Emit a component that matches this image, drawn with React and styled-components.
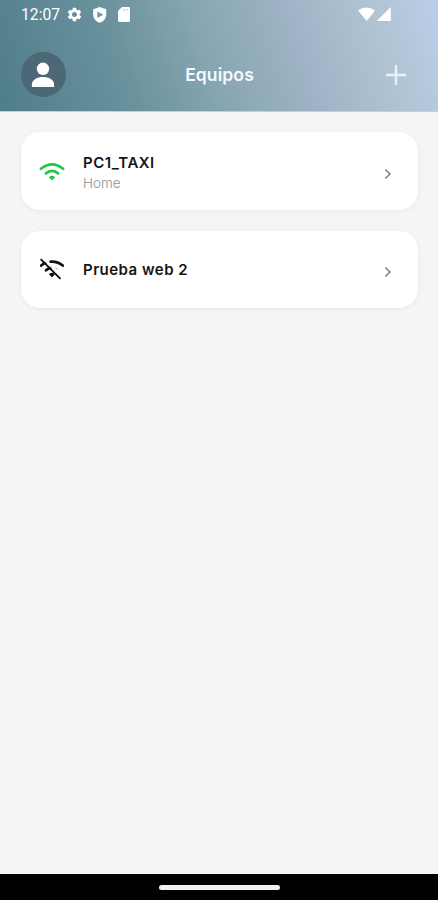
import React from "react";
import styled, { createGlobalStyle } from "styled-components";
import { MdSettings } from "react-icons/md";

const devices = [
  { id: 1, name: "PC1_TAXI", place: "Home", online: true },
  { id: 2, name: "Prueba web 2", place: null, online: false },
];

const ShieldIcon = () => (
  <svg width="14" height="16" viewBox="0 0 14 16">
    <path d="M6.7 0 L13.2 2.3 V7.4 C13.2 11.4 10.6 14.4 6.7 15.8 C2.8 14.4 .2 11.4 .2 7.4 V2.3 Z" fill="#fff" />
    <path d="M4.4 4.4 L10.2 7.7 L4.4 11 Z" fill="#6f96a3" />
  </svg>
);

const SdCardIcon = () => (
  <svg width="12" height="15" viewBox="0 0 12 15">
    <path d="M4 0 H10.6 Q12 0 12 1.4 V13.6 Q12 15 10.6 15 H1.4 Q0 15 0 13.6 V4 Z" fill="#fff" />
    <path d="M4.8 2.8 H10" stroke="#a5bec6" strokeWidth="1" strokeDasharray="1.2 .8" />
  </svg>
);

const SignalIcons = () => (
  <svg width="34" height="15" viewBox="0 0 34 15">
    <path d="M0 3.4 Q8.5 -2.6 17 3.4 L8.8 14 Z" fill="#fff" />
    <path d="M32.8 0 V14 H18.6 Z" fill="#fff" />
  </svg>
);

const PersonIcon = () => (
  <svg width="24" height="26" viewBox="0 0 24 26">
    <circle cx="12" cy="6.8" r="6.2" fill="#fff" />
    <path d="M.9 25 V22.4 C.9 17.6 6.4 15 12 15 C17.6 15 23.1 17.6 23.1 22.4 V25 Z" fill="#fff" />
  </svg>
);

const WifiIcon = () => (
  <svg width="26" height="22" viewBox="0 0 26 22" fill="none">
    <path d="M2 7.8 Q13 -.9 24 7.8" stroke="#1fc843" strokeWidth="2.7" strokeLinecap="round" />
    <path d="M7 12.4 Q13 7.4 19 12.4" stroke="#1fc843" strokeWidth="2.8" strokeLinecap="round" />
    <path d="M10.6 16.2 Q13 14.4 15.4 16.2 L13 18.6 Z" fill="#1fc843" stroke="#1fc843" strokeWidth="1.2" strokeLinejoin="round" />
  </svg>
);

const WifiOffIcon = () => (
  <svg width="26" height="22" viewBox="0 0 26 22" fill="none" stroke="#111" strokeLinecap="round">
    <path d="M2.2 7.6 Q4.3 5.8 6.6 4.8 M11.6 3.6 Q18.6 3.1 23.8 7.6" strokeWidth="2.7" />
    <path d="M7 12.2 Q9.1 10.2 11.8 9.8" strokeWidth="2.8" />
    <path d="M16.6 9.9 L18.2 11" strokeWidth="1" opacity=".4" />
    <path d="M10.8 16.3 Q13 14.5 15.2 16.3 L13 18.6 Z" fill="#111" strokeWidth="1.2" strokeLinejoin="round" />
    <path d="M4 .8 L22.6 19.4" stroke="#fff" strokeWidth="1.2" />
    <path d="M2.2 1.6 L21 20.4" strokeWidth="1.9" />
  </svg>
);

export default () => {
  return (
    <Screen>
      <GlobalStyle />
      <Header>
        <StatusBar>
          <Clock>12:07</Clock>
          <StatusIcons>
            <MdSettings size={17} color="#fff" />
            <ShieldIcon />
            <SdCardIcon />
          </StatusIcons>
          <SignalIcons />
        </StatusBar>
        <TitleBar>
          <Avatar aria-label="Perfil">
            <PersonIcon />
          </Avatar>
          <Title>Equipos</Title>
          <AddButton aria-label="Agregar">
            <svg width="20" height="20" viewBox="0 0 20 20">
              <path d="M10 0 V20 M0 10 H20" stroke="#e8f1fa" strokeWidth="2.4" />
            </svg>
          </AddButton>
        </TitleBar>
      </Header>

      <DeviceList>
        {devices.map(device => (
          <DeviceCard key={device.id}>
            <DeviceIcon $online={device.online}>
              {device.online ? <WifiIcon /> : <WifiOffIcon />}
            </DeviceIcon>
            <DeviceText $hasPlace={Boolean(device.place)}>
              <DeviceName>{device.name}</DeviceName>
              {device.place ? <DevicePlace>{device.place}</DevicePlace> : null}
            </DeviceText>
            <Chevron width="8" height="12" viewBox="0 0 8 12">
              <path d="M1.4 1.4 L6 6 L1.4 10.6" fill="none" stroke="#777" strokeWidth="1.4" />
            </Chevron>
          </DeviceCard>
        ))}
      </DeviceList>

      <NavigationBar>
        <HomeHandle />
      </NavigationBar>
    </Screen>
  );
};


const GlobalStyle = createGlobalStyle`
  * {
    box-sizing: border-box;
  }

  body {
    margin: 0;
    font-family: Inter, Roboto, sans-serif;
  }
`;

const Screen = styled.div`
  display: flex;
  flex-direction: column;
  height: 900px;
  background: #f5f5f5;
`;

const Header = styled.header`
  height: 112px;
  background: linear-gradient(72deg, #507d8b 0%, #66909b 26%, #87a6b1 48%, #9fb4c6 68%, #b0c4d4 86%, #bccce6 98%);
  border-bottom: 1px solid #c3d0d8;
`;

const StatusBar = styled.div`
  display: flex;
  align-items: center;
  height: 29px;
  padding: 0 46px 0 21px;
`;

const Clock = styled.span`
  width: 45px;
  color: #fff;
  font-family: Roboto, sans-serif;
  font-size: 15.7px;
  line-height: 20px;
`;

const StatusIcons = styled.div`
  display: flex;
  flex: 1;
  align-items: center;
  gap: 10px;

  svg:last-child {
    margin-left: 1px;
  }
`;

const TitleBar = styled.div`
  display: grid;
  grid-template-columns: 45px 1fr 45px;
  align-items: center;
  height: 45px;
  margin-top: 23px;
  padding: 0 20px 0 21px;
`;

const Avatar = styled.button`
  display: flex;
  align-items: center;
  justify-content: center;
  width: 45px;
  height: 45px;
  padding: 0 1px 0 0;
  border: none;
  border-radius: 50%;
  background: #4c6775;
`;

const Title = styled.h1`
  margin: 0;
  color: #f4fafe;
  font-size: 17.5px;
  font-weight: 600;
  letter-spacing: 0.1px;
  line-height: 24px;
  text-align: center;
`;

const AddButton = styled.button`
  display: flex;
  align-items: center;
  justify-content: center;
  width: 45px;
  height: 45px;
  padding: 0;
  border: none;
  background: none;
`;

const DeviceList = styled.main`
  display: flex;
  flex: 1;
  flex-direction: column;
  gap: 21px;
  padding: 20px 20px 0 21px;
`;

const DeviceCard = styled.article`
  display: flex;
  align-items: center;
  height: 77.5px;
  padding: 0 26px 0 18px;
  border-radius: 19px;
  background: #fff;
  box-shadow: 0 1px 5px rgba(0, 0, 0, 0.06);
`;

const DeviceIcon = styled.div`
  display: flex;
  width: 44px;
  padding-top: ${props => (props.$online ? "3px" : "0")};
  padding-bottom: ${props => (props.$online ? "0" : "1px")};
`;

const DeviceText = styled.div`
  flex: 1;
  padding-top: ${props => (props.$hasPlace ? "4px" : "0")};
`;

const DeviceName = styled.div`
  color: #151515;
  font-size: 15px;
  font-weight: 600;
  letter-spacing: 0.48px;
  line-height: 21px;
`;

const DevicePlace = styled.div`
  color: #8d9194;
  font-size: 13.5px;
  font-weight: 300;
  line-height: 21px;
`;

const Chevron = styled.svg`
  margin-top: 6px;
`;

const NavigationBar = styled.footer`
  display: flex;
  align-items: center;
  justify-content: center;
  height: 26px;
  background: #000;
`;

const HomeHandle = styled.div`
  width: 121px;
  height: 5px;
  border-radius: 3px;
  background: #f2f0f0;
`;
